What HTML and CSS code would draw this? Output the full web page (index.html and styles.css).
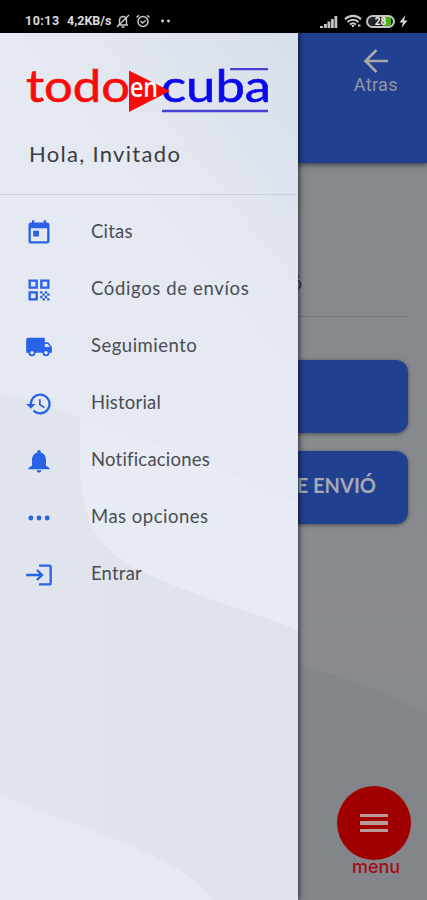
FILE: index.html
```html
<!DOCTYPE html>
<html lang="es">
<head>
<meta charset="utf-8">
<title>Todo en Cuba</title>
<link rel="stylesheet" href="styles.css">
</head>
<body>
<div class="status">
  <span class="clock">10:13</span>
  <span class="speed">4,2KB/s</span>
  <svg class="st-bell" width="14" height="14" viewBox="0 0 14 14" fill="none" stroke="#c9c9c9" stroke-width="1.4"><path d="M2 11h10M3.500 10.500V6a3.500 3.500 0 0 1 7 0v4.500M5.500 13h3M1 13L13 1"/></svg>
  <svg class="st-alarm" width="16" height="14" viewBox="0 0 16 14" fill="none" stroke="#c9c9c9" stroke-width="1.500"><circle cx="8" cy="7.500" r="5"/><path d="M5.500 7l2 2 3-2.500M1.500 3.500L4 1.200M14.500 3.500L12 1.200"/></svg>
  <svg class="st-dots" width="12" height="4" viewBox="0 0 12 4" fill="#d5d5d5"><circle cx="2.500" cy="2" r="1.400"/><circle cx="8.500" cy="2" r="1.400"/></svg>
  <span class="grow"></span>
  <svg class="st-signal" width="18" height="13" viewBox="0 0 18 13" fill="#c4c4c4"><path d="M0 11h3v2H0zM4 9h2.800v4H4zM7.500 6.500h2.800V13H7.500zM11 4h2.800v9H11zM14.500 1h2.800v12h-2.800z"/></svg>
  <svg class="st-wifi" width="18" height="14" viewBox="0 0 18 14" fill="none" stroke="#c9c9c9" stroke-width="2.100"><path d="M1 5.200c4.500-4.500 11.500-4.500 16 0M3.500 8c3-3 8-3 11 0M6 10.600c2-1.800 4-1.800 6 0"/><path d="M9 11v2M14 11.500h2.500" /></svg>
  <span class="battery">28</span>
  <svg class="st-bolt" width="9" height="13" viewBox="0 0 9 13" fill="#d8d8d8"><path d="M6.500 0L.5 7.500H4L2.500 13 8.500 5.500H5z"/></svg>
</div>
<div class="stage">
  <main class="page">
    <svg class="backdrop" viewBox="0 0 427 867" preserveAspectRatio="none"><path fill="#82868b" d="M290 630C340 640 390 662 427 679V867H290Z"/></svg>
    <header class="topbar">
      <div class="back">
        <svg width="26" height="26" viewBox="0 0 26 26" fill="none" stroke="#a9a8aa" stroke-width="2.600"><path d="M25 13H2.500M13.500 2L2.500 13l11 11"/></svg>
        <span>Atras</span>
      </div>
    </header>
    <section class="form">
      <div class="field">ó</div>
      <div class="action"></div>
      <div class="action">E ENVIÓ</div>
    </section>
    <div class="fab">
      <div class="disc"><i></i><i></i><i></i></div>
      <span>menu</span>
    </div>
  </main>
  <aside class="drawer">
    <svg class="backdrop" viewBox="0 0 298 867" preserveAspectRatio="none">
      <defs>
        <linearGradient id="low" x1="0" y1="0" x2="1" y2="0"><stop offset="0" stop-color="#e1e5ed"/><stop offset="1" stop-color="#dfe2ea"/></linearGradient>
        <linearGradient id="top" x1="0" y1="1" x2="1" y2="0"><stop offset=".5" stop-color="#dbe2ec" stop-opacity="0"/><stop offset="1" stop-color="#d7dfea"/></linearGradient>
      </defs>
      <path fill="url(#top)" d="M0 0H298V330C200 310 120 300 80 370L0 300Z"/>
      <path fill="#e7ebf3" d="M80 385C150 405 230 440 298 470V597C220 568 150 550 112 519C80 490 76 450 80 385Z"/>
      <path fill="url(#low)" d="M0 360C30 366 55 375 81 386C76 450 82 492 112 519C150 550 220 568 298 597V867H213C190 830 100 800 0 763Z"/>
      <path fill="#e5e9f0" d="M0 763C100 800 190 830 213 867H0Z"/>
    </svg>
    <div class="brand">
      <svg width="256" height="76" viewBox="22 52 256 76">
        <text class="word red" x="26" y="101.500" textLength="104" lengthAdjust="spacingAndGlyphs">todo</text>
        <text class="word blue" x="161" y="101.500" textLength="110" lengthAdjust="spacingAndGlyphs">cuba</text>
        <path fill="#f80b0b" d="M129 70.500L170 91 129 112z"/>
        <text class="en" x="130" y="97" textLength="28" lengthAdjust="spacingAndGlyphs">en</text>
        <path fill="#4a42d6" d="M230 68h38v2.300h-38zM162 109.700h106v2.500H162z"/>
      </svg>
      <p class="hello">Hola, Invitado</p>
    </div>
    <nav class="menu">
      <a class="item"><svg viewBox="0 0 24 24"><path d="M19 3h-1V1h-2v2H8V1H6v2H5a2 2 0 0 0-2 2v14c0 1.100.9 2 2 2h14a2 2 0 0 0 2-2V5a2 2 0 0 0-2-2zm0 16H5V8h14v11zM7 10h5v5H7z"/></svg><span class="tight">Citas</span></a>
      <a class="item"><svg viewBox="0 0 24 24"><path d="M3 11h8V3H3v8zm2-6h4v4H5V5zM3 21h8v-8H3v8zm2-6h4v4H5v-4zM13 3v8h8V3h-8zm6 6h-4V5h4v4zM19 19h2v2h-2zM13 13h2v2h-2zM15 15h2v2h-2zM13 17h2v2h-2zM15 19h2v2h-2zM17 17h2v2h-2zM17 13h2v2h-2zM19 15h2v2h-2z"/></svg><span class="wide">Códigos de envíos</span></a>
      <a class="item"><svg viewBox="0 0 24 24"><path d="M20 8h-3V4H3a2 2 0 0 0-2 2v11h2a3 3 0 0 0 6 0h6a3 3 0 0 0 6 0h2v-5l-3-4zM6 18.500a1.500 1.500 0 1 1 0-3 1.500 1.500 0 0 1 0 3zm13.500-9l1.960 2.500H17V9.500h2.500zM18 18.500a1.500 1.500 0 1 1 0-3 1.500 1.500 0 0 1 0 3z"/></svg><span>Seguimiento</span></a>
      <a class="item"><svg viewBox="0 0 24 24"><path d="M13 3a9 9 0 0 0-9 9H1l3.890 3.890.07.140L9 12H6a7 7 0 1 1 2.060 4.940l-1.420 1.420A9 9 0 1 0 13 3zm-1 5v5l4.280 2.540.72-1.210-3.500-2.080V8H12z"/></svg><span class="tight">Historial</span></a>
      <a class="item"><svg viewBox="0 0 24 24"><path d="M12 22a2 2 0 0 0 2-2h-4a2 2 0 0 0 2 2zm6-6v-5c0-3.070-1.640-5.640-4.500-6.320V4a1.500 1.500 0 0 0-3 0v.68C7.630 5.360 6 7.920 6 11v5l-3 2v1h18v-1l-3-2z"/></svg><span class="tight">Notificaciones</span></a>
      <a class="item"><svg viewBox="0 0 24 24"><circle cx="5" cy="12" r="2.100"/><circle cx="12" cy="12" r="2.100"/><circle cx="19" cy="12" r="2.100"/></svg><span>Mas opciones</span></a>
      <a class="item"><svg viewBox="0 0 24 24"><path d="M11 7L9.600 8.400l2.600 2.600H1v2h11.200l-2.600 2.600L11 17l5-5-5-5zm10 12h-9v2h9a2 2 0 0 0 2-2V5a2 2 0 0 0-2-2h-9v2h9v14z"/></svg><span class="tight">Entrar</span></a>
    </nav>
  </aside>
</div>
</body>
</html>
```
FILE: styles.css
```css
* { box-sizing: border-box; }
body {
  margin: 0;
  width: 427px;
  height: 900px;
  display: flex;
  flex-direction: column;
  overflow: hidden;
  font-family: Lato, "Liberation Sans", sans-serif;
}
.status {
  height: 33px;
  flex: none;
  background: #000;
  color: #dcdcdc;
  display: flex;
  align-items: center;
  padding: 9px 19px 0 25px;
  font: bold 12.5px/16px Roboto, sans-serif;
}
.clock { width: 42px; letter-spacing: .5px; }
.speed { width: 49px; font-size: 12.5px; }
.st-alarm { margin-left: 5px; }
.st-dots { margin-left: 9px; }
.grow { flex: 1; }
.st-signal { margin-right: 1px; }
.st-wifi { margin-left: 5px; }
.battery {
  margin: 0 4px;
  width: 29px;
  height: 13px;
  border: 2px solid #c4c4c4;
  border-radius: 7px;
  background: linear-gradient(90deg, #222 58%, #46b012 58%, #46b012 90%, #222 90%);
  color: #eee;
  font-size: 10px;
  line-height: 9px;
  text-align: center;
}
.stage { position: relative; flex: 1; min-height: 0; }
.backdrop { position: absolute; inset: 0; width: 100%; height: 100%; }

.page {
  position: relative;
  height: 100%;
  background: linear-gradient(#85888e, #85898e 35%, #898b90 70%, #84888d);
}
.topbar {
  position: relative;
  height: 130px;
  background: #21408f;
  box-shadow: 0 2px 5px rgba(0, 0, 0, .5);
  display: flex;
  justify-content: flex-end;
  padding: 15px 29px 0 0;
}
.back {
  display: flex;
  flex-direction: column;
  align-items: center;
  color: #9295a8;
  font: 18px/22px Roboto, sans-serif;
  letter-spacing: .4px;
}
.form { position: relative; padding: 0 19px 0 36px; }
.field {
  height: 154px;
  border-bottom: 1px solid #74777c;
  padding: 109px 106px 0 0;
  text-align: right;
  color: #2d2f32;
  font-size: 17px;
  line-height: 22px;
  margin-bottom: 43px;
}
.action {
  height: 73px;
  margin-bottom: 18px;
  border-radius: 12px;
  background: #21408f;
  box-shadow: 0 1px 4px rgba(0, 0, 0, .45);
  padding: 22px 32px 0 0;
  text-align: right;
  color: #a5a9b3;
  font-size: 20px;
  line-height: 24px;
  font-weight: bold;
}
.fab {
  position: absolute;
  right: 16px;
  bottom: 24px;
  width: 74px;
  display: flex;
  flex-direction: column;
  align-items: center;
  color: #a40d17;
  font: 500 18px/18px Inter, sans-serif;
}
.disc {
  width: 74px;
  height: 74px;
  border-radius: 50%;
  background: #a10000;
  display: flex;
  flex-direction: column;
  align-items: center;
  justify-content: center;
  gap: 4px;
}
.disc i { width: 28px; height: 3.5px; background: #b99a9a; }
.fab span { margin-left: 4px; margin-top: -2px; }

.drawer {
  position: absolute;
  left: 0;
  top: 0;
  width: 298px;
  height: 100%;
  background: #e5e9f1;
  box-shadow: 1px 0 6px rgba(0, 0, 0, .7);
  clip-path: inset(0 -12px 0 0);
}
.brand {
  position: relative;
  height: 162px;
  padding: 19px 0 0 22px;
  border-bottom: 1px solid #cbd1da;
}
.brand svg { display: block; overflow: visible; }
.word { font-family: Lato, sans-serif; font-size: 44px; font-weight: 400; stroke-width: .6px; }
.red { fill: #f80b0b; stroke: #f80b0b; }
.blue { fill: #0b08ec; stroke: #0b08ec; }
.en { font: 600 27px "Open Sans", sans-serif; fill: #fff; }
.hello {
  margin: 12px 0 0 7px;
  font-size: 22px;
  line-height: 28px;
  letter-spacing: 1.3px;
  color: #3a3c42;
}
.menu { position: relative; padding-top: 9px; }
.item {
  height: 57px;
  display: flex;
  align-items: center;
  gap: 38px;
  padding-left: 25px;
  font-size: 18.5px;
  line-height: 24px;
  letter-spacing: .5px;
  color: #4a4d53;
}
.item svg { width: 28px; height: 28px; fill: #2962e6; }
.item span { margin-top: -4px; white-space: nowrap; }
.item .wide { letter-spacing: .64px; }
.item .tight { letter-spacing: .2px; }
```
